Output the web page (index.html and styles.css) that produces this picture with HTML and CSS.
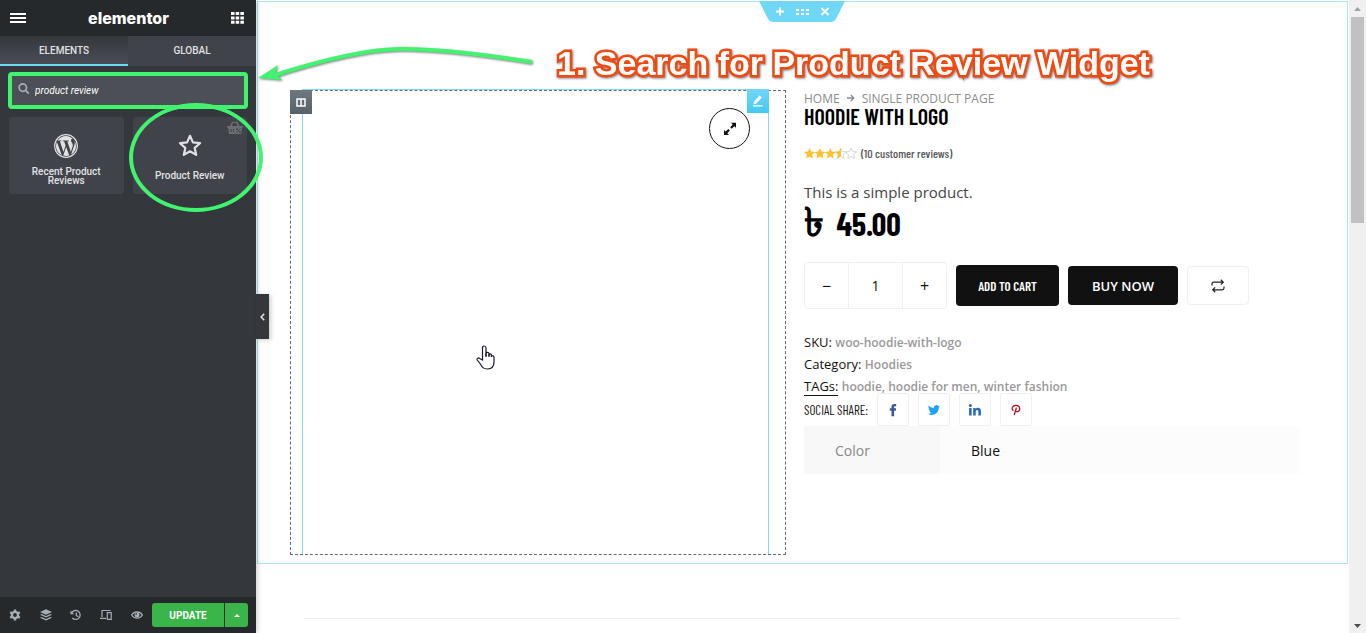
FILE: index.html
```html
<!DOCTYPE html>
<html lang="en">
  <head>
    <meta charset="UTF-8" />
    <meta name="viewport" content="width=device-width, initial-scale=1.0" />
    <title>Elementor | Single Product</title>
    <link rel="stylesheet" href="styles.css">
  </head>
  <body>
    <aside class="panel">
      <header class="panel-header">
        <button class="icon-btn" aria-label="Menu">
          <svg width="16" height="12" viewBox="0 0 16 12"><path d="M0 2h16M0 6h16M0 10h16" stroke="#fff" stroke-width="2" /></svg>
        </button>
        <span class="logo">elementor</span>
        <button class="icon-btn" aria-label="Widgets">
          <svg width="13" height="12" viewBox="0 0 13 12" fill="#fff"><path d="M0 0h3.5v3H0zM4.7 0h3.5v3H4.7zM9.4 0h3.5v3H9.4zM0 4.4h3.5v3H0zM4.7 4.4h3.5v3H4.7zM9.4 4.4h3.5v3H9.4zM0 8.8h3.5v3H0zM4.7 8.8h3.5v3H4.7zM9.4 8.8h3.5v3H9.4z" /></svg>
        </button>
      </header>
      <nav class="tabs">
        <button class="tab active">ELEMENTS</button>
        <button class="tab">GLOBAL</button>
      </nav>
      <div class="search">
        <svg width="12" height="14" viewBox="0 0 12 14" fill="none" stroke="#a4afb7" stroke-width="1.7"><circle cx="4.8" cy="4.6" r="3.7" /><path d="M7.5 7.3l3.3 3.3" /></svg>
        <input type="text" id="search-input" aria-label="Search Widget" value="product review" />
      </div>
      <div class="widgets">
        <button class="widget">
          <svg width="24" height="24" viewBox="0 0 24 24">
            <circle cx="12" cy="12" r="11.3" fill="none" stroke="#e0e1e3" stroke-width="1.2" />
            <path fill="#e0e1e3" d="M2 12c0 4 2.300 7.400 5.700 9L2.900 7.900C2.300 9.200 2 10.600 2 12zm16.800-.5c0-1.200-.5-2.100-.8-2.700-.5-.8-1-1.500-1-2.300 0-.9.700-1.700 1.600-1.700h.1C16.900 3.100 14.600 2 12 2 8.500 2 5.400 3.800 3.600 6.500h.7c1 0 2.700-.1 2.700-.1.500 0 .6.700.1.800 0 0-.6.100-1.200.1l3.600 10.600 2.100-6.400-1.500-4.200c-.5 0-1-.1-1-.1-.6 0-.5-.8 0-.8 0 0 1.600.1 2.600.1s2.700-.1 2.700-.1c.5 0 .6.700.1.800 0 0-.6.100-1.200.1L16.900 17.900l1-3.300c.6-1.300.9-2.300.9-3.100zm-6.600 1.400l-3 8.700c2.100.6 4.200.5 6.100-.1zm8.600-5.700c.2 1.200 0 2.500-.5 4.100l-3.200 9.300C20.100 19 22 15.700 22 12c0-1.700-.5-3.300-1.200-4.800z" />
          </svg>
          <span>Recent Product Reviews</span>
        </button>
        <button class="widget">
          <svg class="basket" width="16" height="14" viewBox="0 0 16 14" fill="#6a6d73"><path d="M0 5h3l2-4.300h5.500L12.500 5H16v1.500h-1l-.6 6.500H2.200L1 6.500H0zM6 2L4.800 5h5.600L9.300 2z" fill-rule="evenodd" /><path d="M4 8v3M6.500 8v3M9.500 11.500l4-4" stroke="#404349" /><circle cx="10" cy="8.200" r=".9" fill="#404349" /><circle cx="13" cy="11" r=".9" fill="#404349" /></svg>
          <svg class="star" width="24" height="24" viewBox="0 0 24 24" fill="none" stroke="#e0e1e3" stroke-width="2.200" stroke-linejoin="round"><path d="M12 1.800l2.900 6.600 7.100.8-5.300 4.700 1.500 7L12 17.300l-6.200 3.600 1.500-7L2 9.200l7.100-.8z" /></svg>
          <span>Product Review</span>
        </button>
      </div>
      <footer class="panel-footer">
        <button class="tool" aria-label="Settings">
          <svg width="12" height="12" viewBox="0 0 12 12"><circle cx="6" cy="6" r="3.100" fill="none" stroke="#a4afb7" stroke-width="2.400" /><path d="M6 .4v2M6 9.600v2M1.200 3.200l1.700 1M9.100 7.800l1.700 1M1.200 8.800l1.700-1M9.100 4.200l1.700-1" stroke="#a4afb7" stroke-width="2.400" /></svg>
        </button>
        <button class="tool" aria-label="Navigator">
          <svg width="12" height="12" viewBox="0 0 12 12" fill="#a4afb7"><path d="M6 .3l6 2.700-6 2.700L0 3zM1.500 5L6 7l4.500-2 1.500.8-6 2.700L0 5.800zM1.500 8L6 10l4.500-2 1.500.8-6 2.700L0 8.800z" /></svg>
        </button>
        <button class="tool" aria-label="History">
          <svg width="12" height="12" viewBox="0 0 12 12" fill="none" stroke="#a4afb7" stroke-width="1.300"><path d="M2 3.300A4.500 4.500 0 1 1 2.300 9M6.300 3.500v3l2 1.300" /><path d="M.5 1.500v3.700h3.700z" fill="#a4afb7" stroke="none" /></svg>
        </button>
        <button class="tool" aria-label="Responsive Mode">
          <svg width="12" height="12" viewBox="0 0 12 12" fill="none" stroke="#a4afb7" stroke-width="1.200"><path d="M2 8V1.500h8.500M0 9.300h6M7.300 3.700h3.900v6.700H7.300z" /></svg>
        </button>
        <button class="tool" aria-label="Preview Changes">
          <svg width="12" height="10" viewBox="0 0 12 10"><path d="M.6 5C3 .8 9 .8 11.400 5 9 9.200 3 9.200.6 5z" fill="none" stroke="#a4afb7" stroke-width="1.200" /><circle cx="6" cy="4.800" r="2.500" fill="#a4afb7" /><circle cx="5.200" cy="4" r=".8" fill="#26292c" /></svg>
        </button>
        <div class="publish">
          <button class="update">UPDATE</button>
          <button class="update-more" aria-label="Save Options"><svg width="6" height="3" viewBox="0 0 6 3"><path d="M0 3l3-3 3 3z" fill="#fff" /></svg></button>
        </div>
      </footer>
      <button class="collapse" aria-label="Hide Panel"><svg width="5" height="8" viewBox="0 0 5 8"><path d="M4.200.8L1.200 4l3 3.200" fill="none" stroke="#e0e1e3" stroke-width="1.600" /></svg></button>
    </aside>

    <main class="preview">
      <section class="section">
        <div class="section-handle">
          <svg width="86" height="21" viewBox="0 0 86 21">
            <path d="M0 0h86L77.500 17Q75.500 21 72 21H14q-3.500 0-5.500-4z" fill="#71d7f7" />
            <path d="M17 10.500h8M21 6.500v8M62.500 7l7 7M69.500 7l-7 7" stroke="#fff" stroke-width="1.800" />
            <path d="M37 8h3v2h-3zM42 8h3v2h-3zM47 8h3v2h-3zM37 12h3v2h-3zM42 12h3v2h-3zM47 12h3v2h-3z" fill="#fff" />
          </svg>
        </div>
        <div class="columns">
          <div class="gallery-column">
            <span class="column-handle"><svg width="10" height="9" viewBox="0 0 10 9"><path d="M1 1h8v7H1z" fill="none" stroke="#fff" stroke-width="1.500" /><path d="M5 1v7" stroke="#fff" stroke-width="1.500" /></svg></span>
            <div class="gallery">
              <span class="edit-handle"><svg width="12" height="12" viewBox="0 0 12 12"><path d="M1.500 9.200L2 6.500 7.500.5l2.300 2L4.300 8.600zM1 10.200h9.500v1.300H1z" fill="#fff" /></svg></span>
              <button class="zoom-btn" aria-label="Open gallery"><svg width="14" height="14" viewBox="0 0 14 14"><path d="M8 .8h5v5l-1.700-1.600-2.600 2.500-1.500-1.500 2.500-2.600zM6 13H1V8l1.700 1.600 2.600-2.500 1.500 1.500-2.500 2.600z" fill="#111" /></svg></button>
            </div>
          </div>
          <div class="product">
            <nav class="breadcrumb">
              <a href="#">HOME</a>
              <svg width="8" height="8" viewBox="0 0 8 8"><path d="M0 4h6.500M3.800 1l3 3-3 3" fill="none" stroke="#8c8c8c" stroke-width="1.300" /></svg>
              <span>SINGLE PRODUCT PAGE</span>
            </nav>
            <h1>HOODIE WITH LOGO</h1>
            <div class="rating">
              <svg width="53" height="11" viewBox="0 0 53 11">
                <defs>
                  <path id="s" d="M5.500 0l1.600 3.500 3.900.4-2.900 2.600.8 3.900-3.400-2-3.400 2 .8-3.900L0 3.900l3.900-.4z" />
                  <clipPath id="half"><path d="M31 0h6v11h-6z" /></clipPath>
                </defs>
                <g fill="#ffc12e"><use href="#s" /><use href="#s" x="10.400" /><use href="#s" x="20.800" /></g>
                <g fill="none" stroke="#ccc" stroke-width=".8"><use href="#s" x="31.200" /><use href="#s" x="41.600" /></g>
                <g clip-path="url(#half)"><use href="#s" x="31.200" fill="#ffc12e" /></g>
              </svg>
              <a href="#">(10 customer reviews)</a>
            </div>
            <p class="description">This is a simple product.</p>
            <p class="price"><span class="currency">৳</span> 45.00</p>
            <form class="cart">
              <div class="quantity">
                <button type="button" aria-label="Decrease">−</button>
                <input type="text" aria-label="Quantity" value="1" />
                <button type="button" aria-label="Increase">+</button>
              </div>
              <button type="button" class="add-to-cart">ADD TO CART</button>
              <button type="button" class="buy-now">BUY NOW</button>
              <button type="button" class="compare" aria-label="Compare"><svg width="14" height="14" viewBox="0 0 14 14" fill="none" stroke="#222" stroke-width="1.200"><path d="M1 6.500V5q0-1.800 1.800-1.800H12M9.800.8l2.500 2.400-2.500 2.400M13 7.500V9q0 1.800-1.800 1.800H2M4.200 8.400l-2.500 2.400 2.500 2.400" /></svg></button>
            </form>
            <ul class="meta">
              <li>SKU: <span>woo-hoodie-with-logo</span></li>
              <li>Category: <a href="#">Hoodies</a></li>
              <li><span class="tag-label">TAGs:</span> <a href="#">hoodie, hoodie for men, winter fashion</a></li>
            </ul>
            <div class="share">
              <span>SOCIAL SHARE:</span>
              <a href="#" aria-label="Facebook"><svg width="14" height="14" viewBox="0 0 14 14"><path d="M5.500 13.200V7.800H3.800V5.300h1.700V3.800C5.500 1.800 6.600.9 8.300.9h1.900v2.300H9c-.7 0-.9.3-.9.900v1.200h2l-.3 2.500H8.100v5.400z" fill="#3b5998" /></svg></a>
              <a href="#" aria-label="Twitter"><svg width="12" height="12" viewBox="0 0 24 24"><path d="M24 4.600c-.9.400-1.800.7-2.800.8 1-.6 1.800-1.600 2.200-2.700-1 .6-2 1-3.100 1.200A4.900 4.900 0 0 0 11.900 8.400C7.700 8.200 4.100 6.200 1.700 3.200 1.200 4 1 4.700 1 5.600c0 1.700.9 3.200 2.200 4.100-.8 0-1.600-.2-2.200-.6v.1c0 2.400 1.700 4.400 3.900 4.800-.7.200-1.500.2-2.200.1.600 2 2.400 3.400 4.600 3.400A9.900 9.900 0 0 1 0 19.500 14 14 0 0 0 21.500 7.100c1-.7 1.800-1.600 2.500-2.500z" fill="#1da1f2" /></svg></a>
              <a href="#" aria-label="LinkedIn"><svg width="14" height="14" viewBox="0 0 14 14" fill="#2867b2"><circle cx="2.300" cy="2.500" r="1.500" /><path d="M1.100 5h2.500v7.500H1.100zM5.200 5h2.400v1c1.200-1.900 5.300-1.700 5.300 2v4.500h-2.500V8.700c0-2.200-2.700-2-2.700 0v3.800H5.200z" /></svg></a>
              <a href="#" aria-label="Pinterest"><svg width="12" height="12" viewBox="0 0 14 14"><path d="M3.900 8C1 5.500 3 1.500 7 1.500c5.300 0 5.800 7.300 1.300 7.300C7.300 8.800 6.600 8.200 6.600 8.200M7.500 4.300L4.900 13" fill="none" stroke="#bd081c" stroke-width="1.500" /></svg></a>
            </div>
            <table class="attributes">
              <tr>
                <th>Color</th>
                <td>Blue</td>
              </tr>
            </table>
          </div>
        </div>
      </section>
      <hr />
    </main>

    <div class="scrollbar">
      <svg width="7" height="4" viewBox="0 0 7 4"><path d="M0 4l3.500-4L7 4z" fill="#a3a3a3" /></svg>
      <div class="thumb"></div>
      <svg class="down" width="7" height="4" viewBox="0 0 7 4"><path d="M0 0h7L3.500 4z" fill="#505050" /></svg>
    </div>

    <!-- tutorial notes drawn over the editor -->
    <div class="notes">
      <div class="search-mark"></div>
      <div class="widget-mark"></div>
      <svg class="arrow" width="280" height="40" viewBox="0 0 280 40">
        <path d="M14 33Q95 7 140 6T274 19" fill="none" stroke="#41f36f" stroke-width="4" />
        <path d="M0 35L20 22L17 30L24 37z" fill="#41f36f" />
      </svg>
      <p class="step">1. Search for Product Review Widget</p>
      <svg class="pointer" width="19" height="26" viewBox="0 0 19 26"><path d="M6.500 15V3Q6.500 1 8.200 1T10 3v8-3.500q3-.8 3 1.500V11 9q2.500-.5 2.500 1.500V12v-1.500q2.500-.2 2.500 2V17c0 4-2 7-6.500 7S6 22 4 18.500L1.200 15c-.7-1.600 1-2.700 2.500-1.500z" fill="#fff" stroke="#1a1a2a" stroke-width="1.200" /><path d="M10 8v4M13 9v3M15.500 10v2" stroke="#1a1a2a" stroke-width="1.200" /></svg>
    </div>
  </body>
</html>
```
FILE: styles.css
```css
* {
  box-sizing: border-box;
}
body {
  display: flex;
  position: relative;
  height: 100vh;
  margin: 0;
  overflow: hidden;
  background-color: #fff;
  font-family: "Open Sans", "Noto Sans", sans-serif;
}
button {
  padding: 0;
  border: 0;
  background: none;
  color: inherit;
  font-family: inherit;
}
a {
  color: inherit;
  text-decoration: none;
}
svg {
  display: block;
  flex-shrink: 0;
}

/* editor panel */
.panel {
  display: flex;
  flex-direction: column;
  position: relative;
  flex: 0 0 256px;
  background-color: #34383c;
  color: #e0e1e3;
  font-family: Roboto, sans-serif;
  box-shadow: 0 0 6px rgba(0, 0, 0, 0.3);
  z-index: 1;
}
.panel-header {
  display: flex;
  align-items: center;
  justify-content: space-between;
  height: 36px;
  padding: 0 12px 0 10px;
  background-color: #26292c;
}
.logo {
  color: #fff;
  font-family: Inter, sans-serif;
  font-size: 16px;
  font-weight: 800;
}
.tabs {
  display: flex;
  height: 30px;
}
.tab {
  flex: 1;
  padding-bottom: 2px;
  background-color: #404349;
  font-size: 10px;
  font-weight: 500;
}
.tab.active {
  padding-bottom: 0;
  border-bottom: 2px solid #71d7f7;
  background: linear-gradient(#34383c, #4a4d56);
}
.search {
  display: flex;
  align-items: center;
  gap: 5px;
  height: 32px;
  margin: 8px 11px 0;
  padding: 0 7px;
  background-color: #4c4f56;
}
.search input {
  flex: 1;
  min-width: 0;
  padding: 0;
  border: 0;
  outline: 0;
  background: none;
  color: #fff;
  font-family: Roboto, sans-serif;
  font-size: 10px;
  font-style: italic;
}
.widgets {
  display: grid;
  grid-template-columns: 1fr 1fr;
  gap: 9px;
  padding: 11px 9px;
}
.widget {
  display: flex;
  flex-direction: column;
  align-items: center;
  justify-content: flex-start;
  gap: 9px;
  position: relative;
  height: 77px;
  padding: 17px 16px 0;
  border-radius: 3px;
  background-color: #404349;
  font-size: 10px;
  font-weight: 500;
  line-height: 9px;
}
.widget .star {
  margin-bottom: 4px;
}
.widget .basket {
  position: absolute;
  top: 4px;
  right: 4px;
}
.panel-footer {
  display: flex;
  align-items: center;
  height: 36px;
  margin-top: auto;
  background-color: #26292c;
}
.tool {
  display: flex;
  flex: 1;
  justify-content: center;
}
.publish {
  display: flex;
  gap: 1px;
  height: 24px;
  margin-right: 8px;
  color: #fff;
}
.publish button {
  background-color: #39b54a;
}
.update {
  width: 72px;
  border-radius: 3px 0 0 3px;
  font-size: 10px;
  font-weight: 700;
}
.update-more {
  display: flex;
  align-items: center;
  justify-content: center;
  width: 23px;
  border-radius: 0 3px 3px 0;
}
.collapse {
  display: flex;
  align-items: center;
  justify-content: center;
  position: absolute;
  top: 294px;
  left: 256px;
  width: 13px;
  height: 45px;
  background-color: #34383c;
  box-shadow: 2px 1px 4px rgba(0, 0, 0, 0.2);
}

/* page preview */
.preview {
  flex: 1;
  min-width: 0;
  padding: 1px 1px 0;
}
.section {
  position: relative;
  padding: 88px 47px 8px 32px;
  border: 1px solid #a9e5f5;
}
.section-handle {
  display: flex;
  justify-content: center;
  position: absolute;
  top: -1px;
  right: 1px;
  left: -1px;
}
.columns {
  display: grid;
  grid-template-columns: 1fr 1fr;
  gap: 18px;
}
.gallery-column {
  position: relative;
  min-height: 465px;
  padding: 0 16px 0 11px;
  border: 1px dashed #64696f;
}
.gallery {
  position: relative;
  height: calc(100% + 2px);
  margin-top: -2px;
  border: 1px solid #83d9f3;
  border-bottom: 0;
}
.column-handle,
.edit-handle {
  display: flex;
  align-items: center;
  justify-content: center;
  position: absolute;
  top: -1px;
  width: 22px;
  height: 24px;
}
.column-handle {
  left: -1px;
  background: linear-gradient(#6d7882, #556068);
  z-index: 1;
}
.edit-handle {
  right: -1px;
  background: linear-gradient(#71d7f7, #45c8f2);
}
.zoom-btn {
  display: flex;
  align-items: center;
  justify-content: center;
  position: absolute;
  top: 18px;
  right: 18px;
  width: 41px;
  height: 41px;
  border: 1px solid #111;
  border-radius: 50%;
}
.product {
  color: #111;
  font-size: 13px;
}
.breadcrumb {
  display: flex;
  align-items: center;
  gap: 7px;
  height: 16px;
  color: #8c8c8c;
  font-size: 12px;
  font-weight: 500;
}
h1,
.rating,
.price,
.add-to-cart,
.share {
  font-family: "Barlow Condensed", "Roboto Condensed", sans-serif;
}
h1 {
  margin: 0;
  color: #000;
  font-size: 22px;
  font-weight: 600;
  line-height: 20px;
}
.rating {
  display: flex;
  align-items: center;
  gap: 4px;
  height: 16px;
  margin-top: 19px;
  color: #555;
  font-size: 12px;
  font-weight: 500;
}
.description {
  margin: 20px 0 0;
  color: #444;
  font-size: 15px;
  line-height: 22px;
}
.price {
  margin: 0;
  color: #000;
  font-size: 32px;
  font-weight: 700;
  line-height: 40px;
}
.currency {
  margin-right: 6px;
  font-size: 40px;
  line-height: 0;
}
.cart {
  display: flex;
  align-items: center;
  gap: 9px;
  margin-top: 19px;
}
.quantity {
  display: flex;
  width: 143px;
  height: 47px;
  border: 1px solid #f0f0f0;
  border-radius: 4px;
}
.quantity button {
  flex: 1;
  font-size: 16px;
}
.quantity input {
  width: 55px;
  padding: 0;
  border: 1px solid #f0f0f0;
  border-width: 0 1px;
  color: #111;
  font-family: inherit;
  font-size: 14px;
  text-align: center;
}
.add-to-cart,
.buy-now {
  border-radius: 4px;
  background-color: #111;
  color: #fff;
}
.add-to-cart {
  width: 103px;
  height: 41px;
  font-size: 13px;
  font-weight: 600;
}
.buy-now {
  width: 110px;
  height: 39px;
  font-size: 13px;
  font-weight: 600;
}
.compare {
  display: flex;
  align-items: center;
  justify-content: center;
  width: 62px;
  height: 39px;
  border: 1px solid #f0f0f0;
  border-radius: 4px;
}
.meta {
  margin: 22px 0 0;
  padding: 0;
  list-style: none;
  font-size: 13px;
  line-height: 22px;
}
.meta a,
.meta span {
  color: #999;
  font-size: 12px;
  font-weight: 600;
  line-height: 16px;
}
.meta .tag-label {
  border-bottom: 1px solid #111;
  color: #111;
  font-size: 13px;
  font-weight: 400;
}
.share {
  display: flex;
  align-items: center;
  gap: 9px;
  margin-top: -4px;
  font-size: 13px;
}
.share a {
  display: flex;
  align-items: center;
  justify-content: center;
  width: 32px;
  height: 33px;
  border: 1px solid #f0f0f0;
  border-radius: 2px;
}
.attributes {
  width: 100%;
  border-collapse: collapse;
  background-color: #fcfcfc;
  font-size: 14px;
}
.attributes th,
.attributes td {
  height: 48px;
  padding: 0 31px;
  text-align: left;
}
.attributes th {
  width: 136px;
  background-color: #f8f8f8;
  color: #888;
  font-weight: 400;
}
hr {
  margin: 54px 168px 0 47px;
  border: 0;
  border-top: 1px solid #eee;
}
.scrollbar {
  display: flex;
  flex-direction: column;
  align-items: center;
  width: 17px;
  padding: 7px 0 5px;
  background-color: #f0f0f0;
}
.thumb {
  width: 13px;
  height: 206px;
  margin-top: 6px;
  background-color: #c1c1c1;
}
.scrollbar .down {
  margin-top: auto;
}

/* notes */
.notes {
  position: absolute;
  inset: 0;
  z-index: 2;
  pointer-events: none;
}
.search-mark,
.widget-mark,
.arrow,
.step,
.pointer {
  position: absolute;
}
.search-mark {
  top: 72px;
  left: 8px;
  width: 240px;
  height: 37px;
  border: 4px solid #41f36f;
  border-radius: 4px;
}
.widget-mark {
  top: 103px;
  left: 129px;
  width: 134px;
  height: 109px;
  border: 4px solid #41f36f;
  border-radius: 50%;
}
.arrow {
  top: 43px;
  left: 258px;
  filter: drop-shadow(1px 1px 1px rgba(0, 0, 0, 0.5));
}
.step {
  top: 43px;
  left: 557px;
  margin: 0;
  color: #fff;
  font-family: "Liberation Sans", Arial, sans-serif;
  font-size: 34px;
  font-weight: 700;
  line-height: 40px;
  white-space: nowrap;
  -webkit-text-stroke: 5px #f04a12;
  paint-order: stroke fill;
  filter: drop-shadow(1px 1px 1px rgba(0, 0, 0, 0.5));
}
.pointer {
  top: 345px;
  left: 476px;
}
```
